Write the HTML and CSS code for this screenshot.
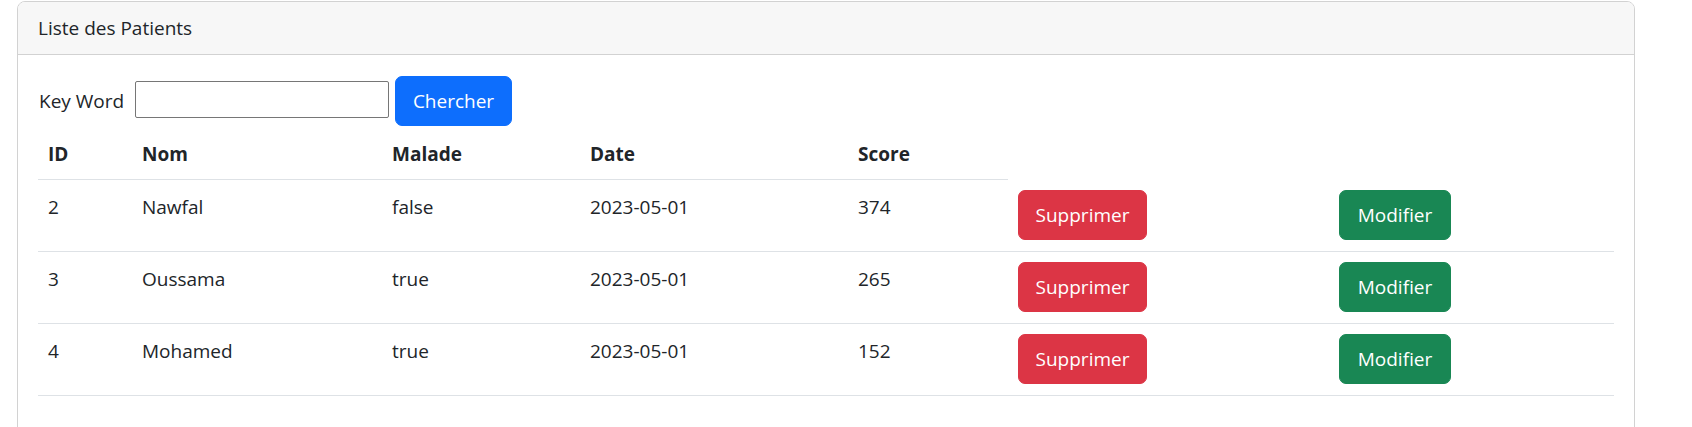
FILE: index.html
```html
<!DOCTYPE html>
<html lang="fr">
<head>
<meta charset="utf-8">
<title>Liste des Patients</title>
<link rel="stylesheet" href="styles.css">
</head>
<body>
<div class="page">
  <div class="card">
    <div class="card-header">Liste des Patients</div>
    <div class="card-body">
      <form class="search">
        <label class="search-label" for="kw">Key Word</label>
        <input class="search-input" id="kw" type="text">
        <button class="btn btn-primary btn-search" type="button">Chercher</button>
      </form>
      <table class="table">
        <colgroup>
          <col class="c-id"><col class="c-nom"><col class="c-malade"><col class="c-date"><col class="c-score"><col class="c-del"><col class="c-edit">
        </colgroup>
        <thead>
          <tr><th>ID</th><th>Nom</th><th>Malade</th><th>Date</th><th>Score</th></tr>
        </thead>
        <tbody>
          <tr>
            <td>2</td><td>Nawfal</td><td>false</td><td>2023-05-01</td><td>374</td>
            <td class="act"><button class="btn btn-danger btn-del" type="button">Supprimer</button></td>
            <td class="act"><button class="btn btn-success btn-edit" type="button">Modifier</button></td>
          </tr>
          <tr>
            <td>3</td><td>Oussama</td><td>true</td><td>2023-05-01</td><td>265</td>
            <td class="act"><button class="btn btn-danger btn-del" type="button">Supprimer</button></td>
            <td class="act"><button class="btn btn-success btn-edit" type="button">Modifier</button></td>
          </tr>
          <tr>
            <td>4</td><td>Mohamed</td><td>true</td><td>2023-05-01</td><td>152</td>
            <td class="act"><button class="btn btn-danger btn-del" type="button">Supprimer</button></td>
            <td class="act"><button class="btn btn-success btn-edit" type="button">Modifier</button></td>
          </tr>
        </tbody>
      </table>
    </div>
  </div>
</div>
</body>
</html>
```

FILE: styles.css
```css
html, body {
  margin: 0;
  padding: 0;
  background: #ffffff;
}

body {
  font-family: "Open Sans", "Noto Sans", "Liberation Sans", sans-serif;
  font-size: 19px;
  line-height: 30px;
  color: #212529;
}

.page {
  padding: 1px 57px 0 17px;
}

.card {
  border: 1px solid #d2d2d2;
  border-radius: 8px;
  overflow: hidden;
  background: #ffffff;
}

.card-header {
  background: #f7f7f7;
  border-bottom: 1px solid #d2d2d2;
  padding: 11px 20px;
  line-height: 30px;
}

.card-body {
  padding: 21px 20px 20px 20px;
}

.search {
  display: flex;
  align-items: flex-start;
  margin-bottom: 3px;
}

.search-label {
  width: 90px;
  margin-top: 10px;
  margin-right: 6px;
  padding-left: 1px;
  line-height: 30px;
  white-space: nowrap;
}

.search-input {
  box-sizing: border-box;
  width: 254px;
  height: 37px;
  margin-top: 5px;
  margin-right: 6px;
  border: 1px solid #767676;
  border-radius: 2px;
  padding: 2px 4px;
  font-family: inherit;
  font-size: 16px;
  background: #ffffff;
}

.btn {
  box-sizing: border-box;
  display: block;
  height: 50px;
  padding: 9px 0;
  border: 1px solid transparent;
  border-radius: 7px;
  font-family: inherit;
  font-size: 19px;
  line-height: 30px;
  color: #ffffff;
  text-align: center;
  cursor: pointer;
}

.btn-primary { background: #0d6efd; border-color: #0d6efd; }
.btn-danger { background: #dc3545; border-color: #dc3545; }
.btn-success { background: #198754; border-color: #198754; }

.btn-search { width: 117px; }
.btn-del { width: 129px; }
.btn-edit { width: 112px; }

.table {
  width: 100%;
  border-collapse: collapse;
  table-layout: fixed;
  margin-bottom: 20px;
}

.c-id { width: 94px; }
.c-nom { width: 250px; }
.c-malade { width: 198px; }
.c-date { width: 268px; }
.c-score { width: 160px; }
.c-del { width: 321px; }
.c-edit { width: 285px; }

.table th {
  text-align: left;
  font-weight: 700;
  padding: 10px 10px;
  line-height: 30px;
  border-bottom: 1px solid #dee2e6;
  vertical-align: top;
}

.table td {
  padding: 10px 10px 11px 10px;
  line-height: 34px;
  border-bottom: 1px solid #dee2e6;
  vertical-align: top;
}
```
